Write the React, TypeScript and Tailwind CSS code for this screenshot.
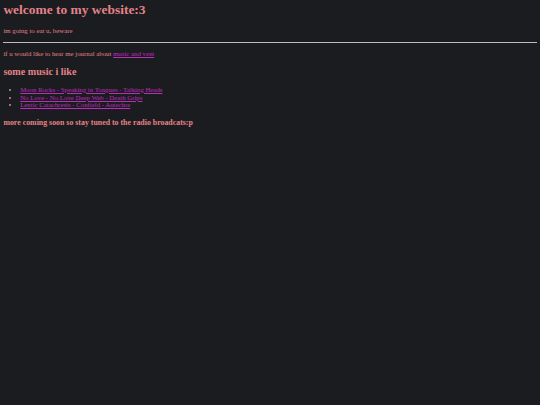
export default function App() {
  const songs = [
    'Moon Rocks - Speaking in Tongues - Talking Heads',
    'No Love - No Love Deep Web - Death Grips',
    'Lentic Catachresis - Confield - Autechre',
  ]

  return (
    <div className="min-h-screen bg-[#1b1c1f] px-[3.4px] pt-[3.4px] text-[#e3828a] font-['Liberation_Serif',serif]">
      {/* Header */}
      <h1 className="text-[13.44px] font-bold leading-[1.107] mb-[9px]">welcome to my website:3</h1>
      <p className="text-[6.8px] leading-[1.15]">im going to eat u, beware</p>

      <hr className="mt-[7.2px] mb-[6.72px] border-t border-[#bdbdbd]" />

      <p className="text-[6.8px] leading-[1.15]">
        if u would like to hear me journal about{' '}
        <a href="#" className="text-[#bd2cbd] underline">
          music and vent
        </a>
      </p>

      {/* Music */}
      <h2 className="text-[10.08px] font-bold leading-[1.107] mt-[8.4px] mb-[8.4px]">some music i like</h2>
      <ul className="list-disc pl-[16.8px] text-[6.8px] leading-[1.15]">
        {songs.map((song) => (
          <li key={song}>
            <a href="#" className="text-[#bd2cbd] underline">
              {song}
            </a>
          </li>
        ))}
      </ul>

      <h3 className="text-[7.86px] font-bold leading-[1.107] mt-[10px]">
        more coming soon so stay tuned to the radio broadcats:p
      </h3>
    </div>
  )
}
